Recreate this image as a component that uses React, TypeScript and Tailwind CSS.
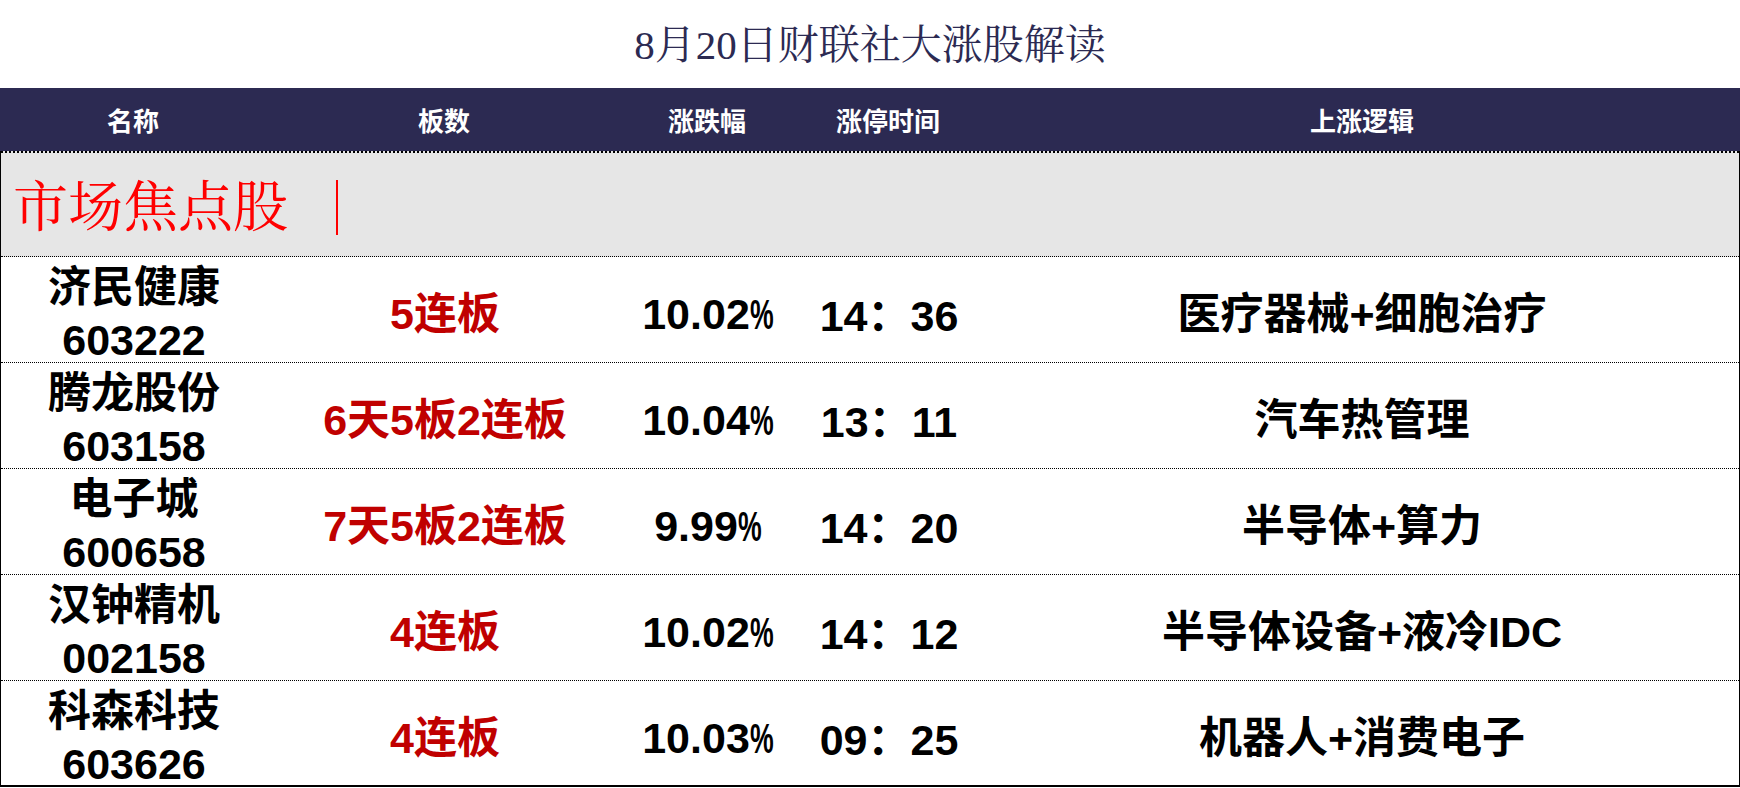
import React from "react";

const rows = [
  { name: "济民健康", code: "603222", board: "5连板", pct: "10.02", time: ["14", "36"], logic: "医疗器械+细胞治疗" },
  { name: "腾龙股份", code: "603158", board: "6天5板2连板", pct: "10.04", time: ["13", "11"], logic: "汽车热管理" },
  { name: "电子城", code: "600658", board: "7天5板2连板", pct: "9.99", time: ["14", "20"], logic: "半导体+算力" },
  { name: "汉钟精机", code: "002158", board: "4连板", pct: "10.02", time: ["14", "12"], logic: "半导体设备+液冷IDC" },
  { name: "科森科技", code: "603626", board: "4连板", pct: "10.03", time: ["09", "25"], logic: "机器人+消费电子" },
];

const sans = "font-['Liberation_Sans','Noto_Sans_CJK_SC',sans-serif]";
const serif = "font-['Liberation_Serif','Noto_Serif_CJK_SC','Noto_Sans_CJK_SC',serif]";

export default function App() {
  return (
    <div className="w-[1740px] h-[788px] bg-white overflow-hidden">
      <div className={`h-[88px] flex items-center justify-center pt-[3px] text-[41px] leading-none text-[#2c2a52] ${serif}`}>
        8月20日财联社大涨股解读
      </div>
      <div className={`h-[63px] bg-[#2c2a52] grid grid-cols-[266px_356px_170px_192px_1fr] items-center pt-[6px] text-white font-bold text-[26px] ${sans}`}>
        <div className="text-center">名称</div>
        <div className="text-center">板数</div>
        <div className="text-center">涨跌幅</div>
        <div className="text-center">涨停时间</div>
        <div className="text-center">上涨逻辑</div>
      </div>
      <div className="border-x border-black">
        <div className={`h-[106px] bg-[#e6e6e6] border-t-2 border-t-black border-b border-b-black border-dotted flex items-center pl-[12px] pt-[6px] text-[55px] leading-none text-[#ff0000] ${serif}`}>
          <span>市场焦点股</span>
          <span className="ml-[48px] inline-block w-[2px] h-[55px] bg-[#ff0000]"></span>
        </div>
        {rows.map((r, i) => (
          <div
            key={i}
            className={`h-[106px] grid grid-cols-[266px_356px_170px_192px_1fr] items-center font-bold text-[43px] text-black ${sans} ${
              i === rows.length - 1 ? "border-b-2 border-b-black border-solid" : "border-b border-b-black border-dotted"
            }`}
          >
            <div className="text-center leading-[53px] pt-[4px]">
              <div>{r.name}</div>
              <div>{r.code}</div>
            </div>
            <div className="text-center text-[#c00000] pt-[4px]">{r.board}</div>
            <div className="text-center pt-[4px] whitespace-nowrap">
              {r.pct}
              <span className="inline-block w-[24px] text-left">
                <span className="inline-block origin-left scale-x-[0.62]">%</span>
              </span>
            </div>
            <div className="text-center pt-[4px] whitespace-nowrap">
              {r.time[0]}
              <span className="font-['Noto_Sans_CJK_SC',sans-serif]">：</span>
              {r.time[1]}
            </div>
            <div className="text-center pt-[4px]">{r.logic}</div>
          </div>
        ))}
      </div>
    </div>
  );
}
